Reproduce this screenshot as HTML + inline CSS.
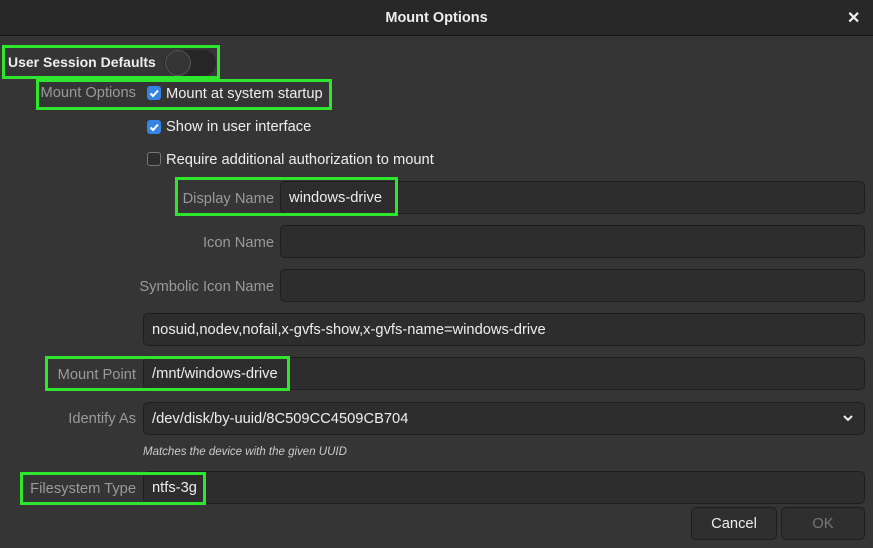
<!DOCTYPE html>
<html><head><meta charset="utf-8"><style>
*{box-sizing:border-box;margin:0;padding:0}
body{width:873px;height:548px;background:#353535;font-family:"Liberation Sans",sans-serif;font-size:14.7px;color:#eee;position:relative;overflow:hidden}
.a{position:absolute;white-space:nowrap}
.tb{left:0;top:0;width:873px;height:36px;background:#282828;border-bottom:1px solid #151515}
.lbl{color:#9a9a9a;text-align:right;line-height:20px}
.en{background:#2d2d2d;border:1px solid #1e1e1e;border-radius:5px;padding-left:8px;line-height:32px;color:#eee}
.g{border:3px solid #2ee62e}
.cb{width:14px;height:14px;border-radius:3px;background:#3584e4}
.cb svg{display:block}
.cbo{width:14px;height:14px;border-radius:3px;background:#2d2d2d;border:1px solid #777}
.bt{background:#2f2f2f;border:1px solid #1e1e1e;border-radius:5px;text-align:center;line-height:32px}
</style></head><body>
<div class="a tb"></div>
<div class="a" style="left:0;width:873px;top:10px;text-align:center;font-weight:bold;color:#eee;font-size:14.5px">Mount Options</div>
<div class="a" style="left:847px;top:8px;font-size:16px;font-weight:bold;color:#eee">✕</div>

<div class="a g" style="left:2px;top:45px;width:218px;height:34px"></div>
<div class="a" style="left:8px;top:54px;font-weight:bold;font-size:14px">User Session Defaults</div>
<div class="a" style="left:164px;top:50px;width:52px;height:26px;border-radius:13px;background:#262626"></div>
<div class="a" style="left:165px;top:50px;width:26px;height:26px;border-radius:13px;background:#353535;border:1px solid #555"></div>

<div class="a g" style="left:36px;top:79px;width:296px;height:31px"></div>
<div class="a lbl" style="left:10px;width:126px;top:83px">Mount Options</div>
<div class="a cb" style="left:147px;top:86px"><svg width="14" height="14"><path d="M3.5 7.5l2.5 2.5 5-5.5" stroke="#fff" stroke-width="2" fill="none"/></svg></div>
<div class="a" style="left:166px;top:86px">Mount at system startup</div>
<div class="a cb" style="left:147px;top:120px"><svg width="14" height="14"><path d="M3.5 7.5l2.5 2.5 5-5.5" stroke="#fff" stroke-width="2" fill="none"/></svg></div>
<div class="a" style="left:166px;top:119px">Show in user interface</div>
<div class="a cbo" style="left:147px;top:152px"></div>
<div class="a" style="left:166px;top:152px">Require additional authorization to mount</div>

<div class="a lbl" style="left:140px;width:134px;top:189px">Display Name</div>
<div class="a en" style="left:280px;top:181px;width:585px;height:33px">windows-drive</div>
<div class="a g" style="left:175px;top:177px;width:223px;height:39px"></div>
<div class="a lbl" style="left:140px;width:134px;top:233px">Icon Name</div>
<div class="a en" style="left:280px;top:225px;width:585px;height:33px"></div>
<div class="a lbl" style="left:90px;width:184px;top:277px">Symbolic Icon Name</div>
<div class="a en" style="left:280px;top:269px;width:585px;height:33px"></div>
<div class="a en" style="left:143px;top:313px;width:722px;height:33px">nosuid,nodev,nofail,x-gvfs-show,x-gvfs-name=windows-drive</div>

<div class="a lbl" style="left:10px;width:126px;top:365px">Mount Point</div>
<div class="a en" style="left:143px;top:357px;width:722px;height:33px">/mnt/windows-drive</div>
<div class="a g" style="left:45px;top:356px;width:245px;height:35px"></div>

<div class="a lbl" style="left:10px;width:126px;top:409px">Identify As</div>
<div class="a en" style="left:143px;top:402px;width:722px;height:33px">/dev/disk/by-uuid/8C509CC4509CB704</div>
<svg class="a" style="left:842px;top:413px" width="12" height="10"><path d="M2 3l4 4 4-4" stroke="#eee" stroke-width="2" fill="none"/></svg>
<div class="a" style="left:143px;top:446px;font-size:11.5px;font-style:italic;color:#ccc">Matches the device with the given UUID</div>

<div class="a lbl" style="left:0px;width:136px;top:479px">Filesystem Type</div>
<div class="a en" style="left:143px;top:471px;width:722px;height:33px">ntfs-3g</div>
<div class="a g" style="left:20px;top:472px;width:186px;height:33px"></div>

<div class="a bt" style="left:691px;top:507px;width:86px;height:33px">Cancel</div>
<div class="a bt" style="left:781px;top:507px;width:84px;height:33px;color:#777">OK</div>
</body></html>
